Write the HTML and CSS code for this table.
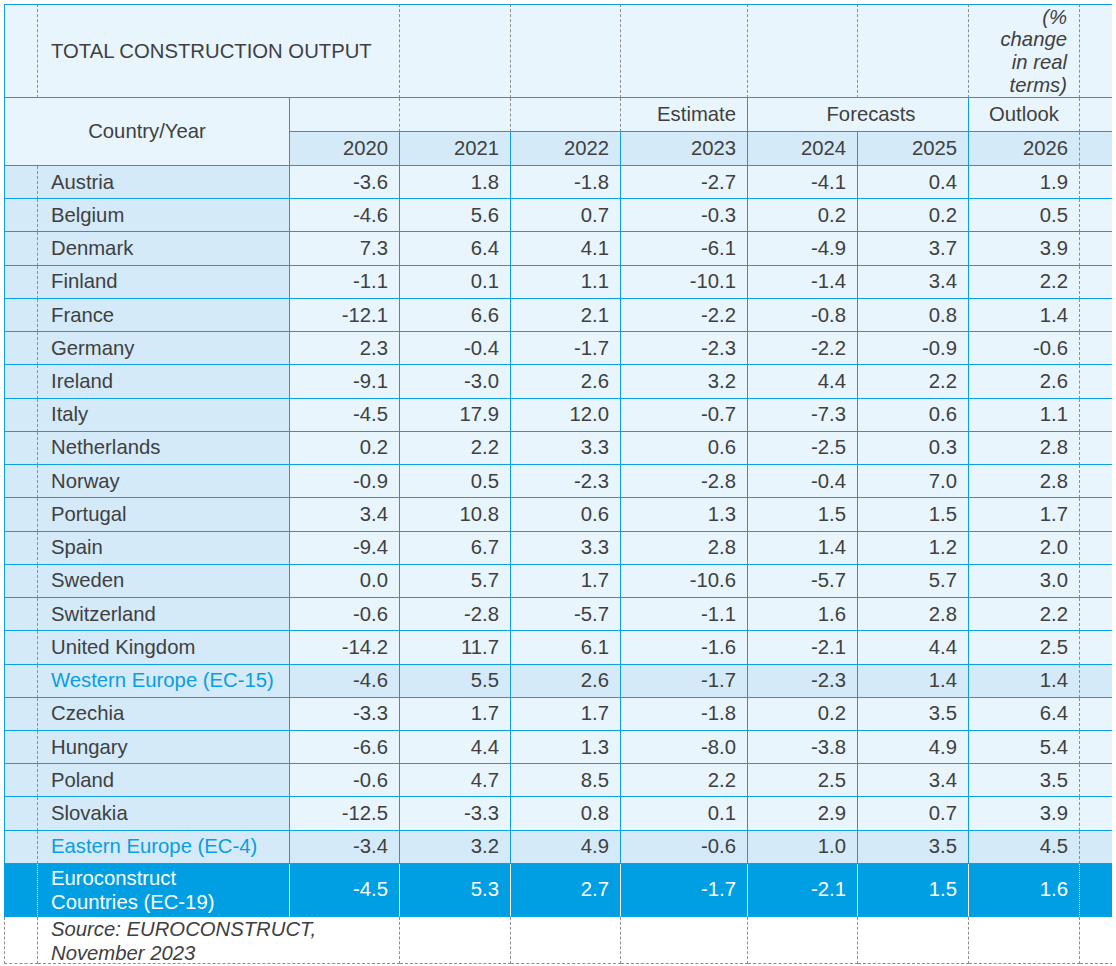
FILE: index.html
```html
<!DOCTYPE html>
<html lang="en">
<head>
<meta charset="utf-8">
<title>Total Construction Output</title>
<link rel="stylesheet" href="styles.css">
</head>
<body>
<div class="sheet">
  <!-- title row -->
  <div class="c first top dr"></div>
  <div class="c top dr span2 name">TOTAL CONSTRUCTION OUTPUT</div>
  <div class="c top dr"></div>
  <div class="c top dr"></div>
  <div class="c top dr"></div>
  <div class="c top dr"></div>
  <div class="c top dr"></div>
  <div class="c top dr note">(%<br>change<br>in real<br>terms)</div>
  <div class="c top"></div>

  <!-- header row 2 -->
  <div class="c first span2 rspan2 center">Country/Year</div>
  <div class="c dr"></div>
  <div class="c dr"></div>
  <div class="c dr"></div>
  <div class="c num">Estimate</div>
  <div class="c span2 forecast">Forecasts</div>
  <div class="c dr center">Outlook</div>
  <div class="c"></div>

  <!-- years -->
  <div class="c dk num">2020</div>
  <div class="c dk num">2021</div>
  <div class="c dk num">2022</div>
  <div class="c dk num">2023</div>
  <div class="c dk num">2024</div>
  <div class="c dk num">2025</div>
  <div class="c dk dr num">2026</div>
  <div class="c dk"></div>

  <!-- data -->
  <div class="c first dk dr"></div><div class="c dk name">Austria</div><div class="c num">-3.6</div><div class="c num">1.8</div><div class="c num">-1.8</div><div class="c num">-2.7</div><div class="c num">-4.1</div><div class="c num">0.4</div><div class="c dr num">1.9</div><div class="c"></div>
  <div class="c first dk dr"></div><div class="c dk name">Belgium</div><div class="c num">-4.6</div><div class="c num">5.6</div><div class="c num">0.7</div><div class="c num">-0.3</div><div class="c num">0.2</div><div class="c num">0.2</div><div class="c dr num">0.5</div><div class="c"></div>
  <div class="c first dk dr"></div><div class="c dk name">Denmark</div><div class="c num">7.3</div><div class="c num">6.4</div><div class="c num">4.1</div><div class="c num">-6.1</div><div class="c num">-4.9</div><div class="c num">3.7</div><div class="c dr num">3.9</div><div class="c"></div>
  <div class="c first dk dr"></div><div class="c dk name">Finland</div><div class="c num">-1.1</div><div class="c num">0.1</div><div class="c num">1.1</div><div class="c num">-10.1</div><div class="c num">-1.4</div><div class="c num">3.4</div><div class="c dr num">2.2</div><div class="c"></div>
  <div class="c first dk dr"></div><div class="c dk name">France</div><div class="c num">-12.1</div><div class="c num">6.6</div><div class="c num">2.1</div><div class="c num">-2.2</div><div class="c num">-0.8</div><div class="c num">0.8</div><div class="c dr num">1.4</div><div class="c"></div>
  <div class="c first dk dr"></div><div class="c dk name">Germany</div><div class="c num">2.3</div><div class="c num">-0.4</div><div class="c num">-1.7</div><div class="c num">-2.3</div><div class="c num">-2.2</div><div class="c num">-0.9</div><div class="c dr num">-0.6</div><div class="c"></div>
  <div class="c first dk dr"></div><div class="c dk name">Ireland</div><div class="c num">-9.1</div><div class="c num">-3.0</div><div class="c num">2.6</div><div class="c num">3.2</div><div class="c num">4.4</div><div class="c num">2.2</div><div class="c dr num">2.6</div><div class="c"></div>
  <div class="c first dk dr"></div><div class="c dk name">Italy</div><div class="c num">-4.5</div><div class="c num">17.9</div><div class="c num">12.0</div><div class="c num">-0.7</div><div class="c num">-7.3</div><div class="c num">0.6</div><div class="c dr num">1.1</div><div class="c"></div>
  <div class="c first dk dr"></div><div class="c dk name">Netherlands</div><div class="c num">0.2</div><div class="c num">2.2</div><div class="c num">3.3</div><div class="c num">0.6</div><div class="c num">-2.5</div><div class="c num">0.3</div><div class="c dr num">2.8</div><div class="c"></div>
  <div class="c first dk dr"></div><div class="c dk name">Norway</div><div class="c num">-0.9</div><div class="c num">0.5</div><div class="c num">-2.3</div><div class="c num">-2.8</div><div class="c num">-0.4</div><div class="c num">7.0</div><div class="c dr num">2.8</div><div class="c"></div>
  <div class="c first dk dr"></div><div class="c dk name">Portugal</div><div class="c num">3.4</div><div class="c num">10.8</div><div class="c num">0.6</div><div class="c num">1.3</div><div class="c num">1.5</div><div class="c num">1.5</div><div class="c dr num">1.7</div><div class="c"></div>
  <div class="c first dk dr"></div><div class="c dk name">Spain</div><div class="c num">-9.4</div><div class="c num">6.7</div><div class="c num">3.3</div><div class="c num">2.8</div><div class="c num">1.4</div><div class="c num">1.2</div><div class="c dr num">2.0</div><div class="c"></div>
  <div class="c first dk dr"></div><div class="c dk name">Sweden</div><div class="c num">0.0</div><div class="c num">5.7</div><div class="c num">1.7</div><div class="c num">-10.6</div><div class="c num">-5.7</div><div class="c num">5.7</div><div class="c dr num">3.0</div><div class="c"></div>
  <div class="c first dk dr"></div><div class="c dk name">Switzerland</div><div class="c num">-0.6</div><div class="c num">-2.8</div><div class="c num">-5.7</div><div class="c num">-1.1</div><div class="c num">1.6</div><div class="c num">2.8</div><div class="c dr num">2.2</div><div class="c"></div>
  <div class="c first dk dr"></div><div class="c dk name">United Kingdom</div><div class="c num">-14.2</div><div class="c num">11.7</div><div class="c num">6.1</div><div class="c num">-1.6</div><div class="c num">-2.1</div><div class="c num">4.4</div><div class="c dr num">2.5</div><div class="c"></div>
  <div class="c first dk dr"></div><div class="c dk name group">Western Europe (EC-15)</div><div class="c dk num">-4.6</div><div class="c dk num">5.5</div><div class="c dk num">2.6</div><div class="c dk num">-1.7</div><div class="c dk num">-2.3</div><div class="c dk num">1.4</div><div class="c dk dr num">1.4</div><div class="c dk"></div>
  <div class="c first dk dr"></div><div class="c dk name">Czechia</div><div class="c num">-3.3</div><div class="c num">1.7</div><div class="c num">1.7</div><div class="c num">-1.8</div><div class="c num">0.2</div><div class="c num">3.5</div><div class="c dr num">6.4</div><div class="c"></div>
  <div class="c first dk dr"></div><div class="c dk name">Hungary</div><div class="c num">-6.6</div><div class="c num">4.4</div><div class="c num">1.3</div><div class="c num">-8.0</div><div class="c num">-3.8</div><div class="c num">4.9</div><div class="c dr num">5.4</div><div class="c"></div>
  <div class="c first dk dr"></div><div class="c dk name">Poland</div><div class="c num">-0.6</div><div class="c num">4.7</div><div class="c num">8.5</div><div class="c num">2.2</div><div class="c num">2.5</div><div class="c num">3.4</div><div class="c dr num">3.5</div><div class="c"></div>
  <div class="c first dk dr"></div><div class="c dk name">Slovakia</div><div class="c num">-12.5</div><div class="c num">-3.3</div><div class="c num">0.8</div><div class="c num">0.1</div><div class="c num">2.9</div><div class="c num">0.7</div><div class="c dr num">3.9</div><div class="c"></div>
  <div class="c first dk dr"></div><div class="c dk name group">Eastern Europe (EC-4)</div><div class="c dk num">-3.4</div><div class="c dk num">3.2</div><div class="c dk num">4.9</div><div class="c dk num">-0.6</div><div class="c dk num">1.0</div><div class="c dk num">3.5</div><div class="c dk dr num">4.5</div><div class="c dk"></div>

  <!-- total -->
  <div class="c first hl hd"></div><div class="c hl name two">Euroconstruct<br>Countries (EC-19)</div><div class="c hl num">-4.5</div><div class="c hl num">5.3</div><div class="c hl num">2.7</div><div class="c hl num">-1.7</div><div class="c hl num">-2.1</div><div class="c hl num">1.5</div><div class="c hl hd num">1.6</div><div class="c hl hend"></div>

  <!-- source -->
  <div class="c first src"></div>
  <div class="c src span2 name italic">Source: EUROCONSTRUCT,<br>November 2023</div>
  <div class="c src"></div>
  <div class="c src"></div>
  <div class="c src"></div>
  <div class="c src"></div>
  <div class="c src"></div>
  <div class="c src"></div>
  <div class="c src"></div>
</div>
</body>
</html>
```

FILE: styles.css
```css
html, body {
  background: #ffffff;
}
body {
  margin: 4px;
}
.sheet {
  display: grid;
  grid-template-columns: 34px 252px 110px 111px 110px 127px 110px 111px 111px 33px;
  grid-template-rows: 94px 34px 34px repeat(21, 33.238px) 53px 47px;
  width: 1109px;
  font-family: "Liberation Sans", Arial, sans-serif;
  font-size: 20.3px;
  color: #404040;
}
.c {
  box-sizing: border-box;
  display: flex;
  align-items: center;
  background: #e8f5fd;
  border-right: 1px solid #0f9fe1;
  border-bottom: 1px solid #0f9fe1;
  line-height: 23px;
  white-space: nowrap;
  min-width: 0;
}
.first { border-left: 1px solid #0f9fe1; }
.top { border-top: 1px solid #0f9fe1; }
.dr { border-right: 1px dashed #8e8e8e; }
.dk { background: #d4eaf9; }
.span2 { grid-column: span 2; }
.rspan2 { grid-row: span 2; }
.name { padding-left: 13px; }
.num {
  justify-content: flex-end;
  padding-right: 11px;
}
.center { justify-content: center; }
.forecast {
  justify-content: center;
  padding-left: 26px;
}
.note {
  justify-content: flex-end;
  text-align: right;
  padding-right: 12px;
  font-style: italic;
  line-height: 22.7px;
}
.group { color: #0b9de0; }
.hl {
  background: #009fe3;
  color: #ffffff;
  border-right-color: #ffffff;
  border-bottom-color: #009fe3;
}
.hl.first { border-left-color: #009fe3; }
.hd { border-right: 1px dotted #e6f4fc; }
.hend { border-right-color: #009fe3; }
.two {
  align-items: center;
  line-height: 24px;
}
.src {
  background: #ffffff;
  border-right: 1px dashed #8e8e8e;
  border-bottom: 1px dashed #8e8e8e;
}
.src.first { border-left: 1px dashed #8e8e8e; }
.italic {
  font-style: italic;
  align-items: flex-start;
  line-height: 24px;
}
```
